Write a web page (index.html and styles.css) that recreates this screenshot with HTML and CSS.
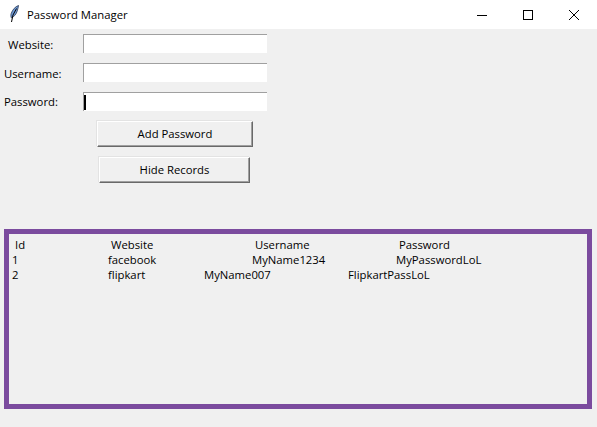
FILE: index.html
```html
<!DOCTYPE html>
<html lang="en">
<head>
<meta charset="utf-8">
<title>Password Manager</title>
<link rel="stylesheet" href="styles.css">
</head>
<body>
<div class="window">
  <header class="titlebar">
    <svg class="app-icon" width="16" height="20" viewBox="0 0 16 20" aria-hidden="true">
      <path d="M12.500 1.500C9.500 2.500 6.500 5.500 5.200 9.500c-.5 1.500-.4 3 .1 4.300 2.700-1 4.700-3.300 5.700-6.200.7-2 1.200-4 1.500-6.100z" fill="#6f9ad6" stroke="#24344f" stroke-width=".8"/>
      <path d="M10.500 4.500 7 11 5.500 18" fill="none" stroke="#000" stroke-width="1"/>
    </svg>
    <span class="title">Password Manager</span>
    <div class="window-controls">
      <span class="control"><svg width="12" height="12" viewBox="0 0 12 12"><path d="M1 6.500h10" stroke="#000" stroke-width="1"/></svg></span>
      <span class="control"><svg width="12" height="12" viewBox="0 0 12 12"><rect x="1.500" y="1.500" width="9" height="9" fill="none" stroke="#000" stroke-width="1"/></svg></span>
      <span class="control"><svg width="12" height="12" viewBox="0 0 12 12"><path d="M1 1l10 10M11 1 1 11" stroke="#000" stroke-width="1"/></svg></span>
    </div>
  </header>
  <main class="content">
    <form class="fields">
      <label class="field-label label-website">Website:</label>
      <div class="entry"></div>
      <label class="field-label">Username:</label>
      <div class="entry"></div>
      <label class="field-label label-password">Password:</label>
      <div class="entry"><span class="caret"></span></div>
    </form>
    <div class="actions">
      <button type="button" class="btn btn-add">Add Password</button>
      <button type="button" class="btn btn-hide">Hide Records</button>
    </div>
    <section class="records">
      <div class="row row-head"><span>Id</span><span>Website</span><span>Username</span><span>Password</span></div>
      <div class="row row-first"><span>1</span><span>facebook</span><span>MyName1234</span><span>MyPasswordLoL</span></div>
      <div class="row row-second"><span>2</span><span>flipkart</span><span>MyName007</span><span>FlipkartPassLoL</span></div>
    </section>
  </main>
</div>
</body>
</html>
```
FILE: styles.css
```css
* { box-sizing: border-box; }
html, body { margin: 0; padding: 0; }
body {
  width: 597px;
  height: 427px;
  overflow: hidden;
  background: #f0f0f0;
  color: #000;
  font-family: "Open Sans", "Noto Sans", sans-serif;
  font-size: 11.3px;
}
.window { display: flex; flex-direction: column; height: 427px; }
.titlebar {
  display: flex;
  align-items: center;
  height: 29px;
  flex: none;
  background: #fff;
  padding-left: 6px;
}
.app-icon { flex: none; margin-top: -2px; }
.title { margin-left: 5px; margin-top: -1px; }
.window-controls { display: flex; margin-left: auto; }
.control {
  display: flex;
  align-items: center;
  justify-content: center;
  width: 46px;
  height: 29px;
}
.content { display: flex; flex-direction: column; flex: 1; }
.fields {
  display: grid;
  grid-template-columns: 83px 184px;
  grid-auto-rows: 19px;
  row-gap: 10px;
  margin-top: 5px;
}
.field-label { padding: 1px 0 0 4px; line-height: 19px; white-space: nowrap; }
.label-website { padding-left: 8px; }
.label-password { padding-top: 0; }
.entry {
  background: #fff;
  border-top: 1px solid #a0a0a0;
  border-left: 1px solid #a0a0a0;
  padding: 2px 0 0 0;
}
.caret { display: block; width: 2px; height: 15px; background: #000; }
.actions { display: flex; flex-direction: column; margin-top: 10px; }
.btn {
  display: block;
  height: 26px;
  padding: 0 0 2px;
  background: #f0f0f0;
  border: 1px solid;
  border-color: #fff #696969 #696969 #fff;
  box-shadow: inset -1px -1px 0 #a0a0a0, -1px -1px 0 #e3e3e3;
  font: inherit;
  color: #000;
}
.btn-add { width: 156px; margin-left: 97px; }
.btn-hide { width: 151px; margin-left: 99px; margin-top: 10px; }
.records {
  width: 588px;
  height: 180px;
  margin-left: 4px;
  margin-top: 46px;
  border: 5px solid #7b4b9e;
  padding-top: 3px;
  line-height: 15px;
}
.row { display: grid; white-space: nowrap; }
.row-head { grid-template-columns: 96px 144px 144px 1fr; padding-left: 6px; }
.row-first { grid-template-columns: 96px 144px 144px 1fr; padding-left: 3px; }
.row-second { grid-template-columns: 96px 96px 144px 1fr; padding-left: 3px; }
```
